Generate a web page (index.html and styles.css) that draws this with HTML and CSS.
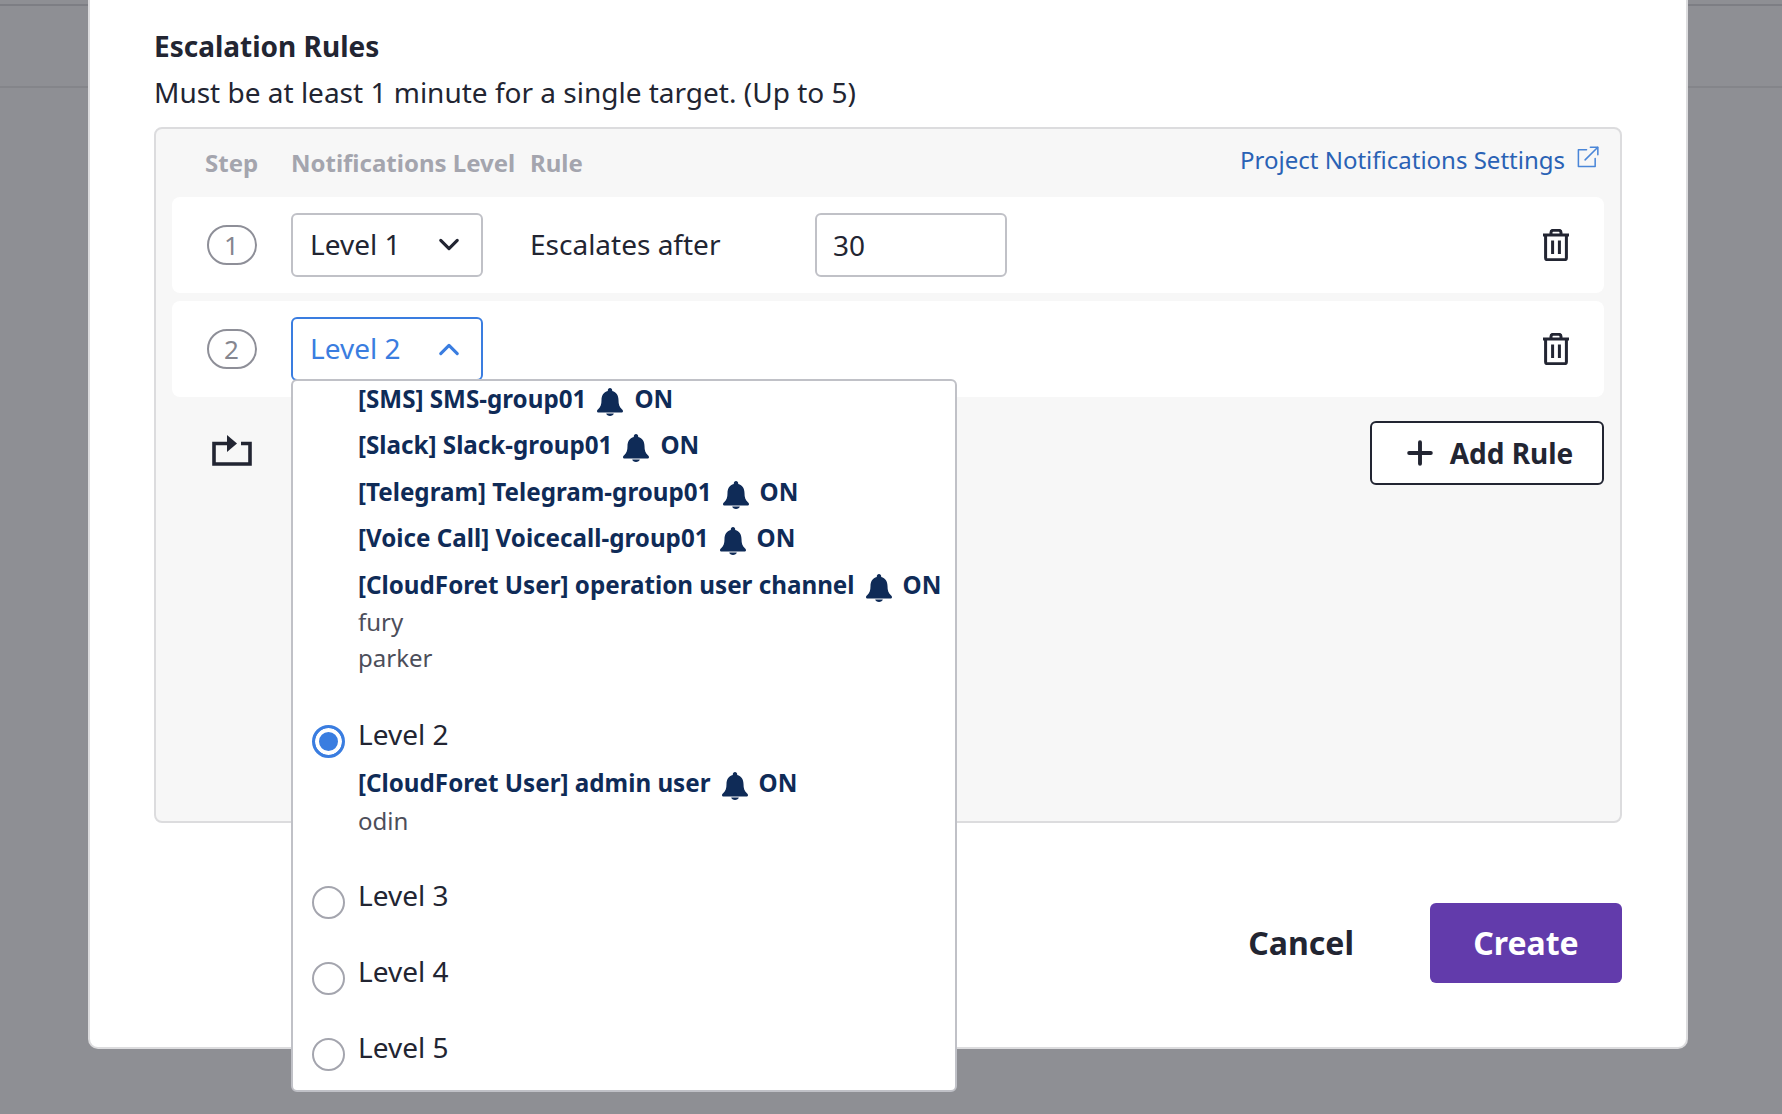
FILE: index.html
```html
<!DOCTYPE html>
<html lang="en">
<head>
    <meta charset="UTF-8">
    <meta name="viewport" content="width=device-width, initial-scale=1.0">
    <title>Escalation Rules</title>
    <link rel="stylesheet" href="styles.css">
</head>
<body>

    <div class="page-bar"></div>

    <div class="backdrop">
        <div class="modal">
            <h2 class="modal-title">Escalation Rules</h2>
            <p class="modal-help">Must be at least 1 minute for a single target. (Up to 5)</p>

            <div class="rules-box">
                <div class="rule-grid rules-head">
                    <span class="head-step">Step</span>
                    <span>Notifications Level</span>
                    <span class="head-rule">Rule</span>
                    <a class="settings-link" href="#">Project Notifications Settings
                        <svg class="icon-external" viewBox="0 0 24 24" fill="none" stroke="currentColor" stroke-width="1.6" stroke-linecap="round" stroke-linejoin="round"><path d="M11 4H2.5v17.5H20V13"/><path d="M9.5 14.5 22.5 1.5"/><path d="M15 1.2h7.8V9"/></svg>
                    </a>
                </div>

                <div class="rule-grid rule-row">
                    <span class="step-badge">1</span>
                    <div class="select-box">
                        <span class="select-label">Level 1</span>
                        <svg class="icon-chevron" viewBox="0 0 24 24" fill="none" stroke="currentColor" stroke-width="3.4" stroke-linecap="round" stroke-linejoin="round"><path d="M3 7l9 9 9-9"/></svg>
                    </div>
                    <span class="rule-text">Escalates after</span>
                    <div class="minutes-input">30</div>
                    <svg class="icon-trash" viewBox="0 0 28 32" fill="none" stroke="currentColor" stroke-width="3"><path d="M1 6h26"/><path d="M9 6V3.500C9 2.200 10 1.300 11.300 1.300h5.400C18 1.300 19 2.200 19 3.500V6"/><path d="M3.600 6v23c0 1 .7 1.700 1.700 1.700h17.400c1 0 1.700-.7 1.700-1.700V6"/><path d="M10.600 11.500v13.500M17.400 11.500v13.500"/></svg>
                </div>

                <div class="rule-grid rule-row">
                    <span class="step-badge">2</span>
                    <div class="select-wrap">
                        <div class="select-box select-open">
                            <span class="select-label">Level 2</span>
                            <svg class="icon-chevron" viewBox="0 0 24 24" fill="none" stroke="currentColor" stroke-width="3.4" stroke-linecap="round" stroke-linejoin="round"><path d="M3 17l9-9 9 9"/></svg>
                        </div>

                        <div class="level-menu">
                            <div class="level-list">
                                <div class="level-option option-scrolled">
                                    <span></span>
                                    <div>
                                        <div class="channel"><b>[SMS] SMS-group01</b><svg class="icon-bell" viewBox="0 0 26 28"><use href="#bell"/></svg><b>ON</b></div>
                                        <div class="channel"><b>[Slack] Slack-group01</b><svg class="icon-bell" viewBox="0 0 26 28"><use href="#bell"/></svg><b>ON</b></div>
                                        <div class="channel"><b>[Telegram] Telegram-group01</b><svg class="icon-bell" viewBox="0 0 26 28"><use href="#bell"/></svg><b>ON</b></div>
                                        <div class="channel"><b>[Voice Call] Voicecall-group01</b><svg class="icon-bell" viewBox="0 0 26 28"><use href="#bell"/></svg><b>ON</b></div>
                                        <div class="channel"><b>[CloudForet User] operation user channel</b><svg class="icon-bell" viewBox="0 0 26 28"><use href="#bell"/></svg><b>ON</b></div>
                                        <div class="user-name">fury</div>
                                        <div class="user-name">parker</div>
                                    </div>
                                </div>
                                <div class="level-option option-selected">
                                    <span class="radio radio-on"></span>
                                    <div>
                                        <div class="level-name">Level 2</div>
                                        <div class="channel channel-first"><b>[CloudForet User] admin user</b><svg class="icon-bell" viewBox="0 0 26 28"><use href="#bell"/></svg><b>ON</b></div>
                                        <div class="user-name">odin</div>
                                    </div>
                                </div>
                                <div class="level-option">
                                    <span class="radio"></span>
                                    <div class="level-name">Level 3</div>
                                </div>
                                <div class="level-option">
                                    <span class="radio"></span>
                                    <div class="level-name">Level 4</div>
                                </div>
                                <div class="level-option">
                                    <span class="radio"></span>
                                    <div class="level-name">Level 5</div>
                                </div>
                            </div>
                        </div>
                    </div>
                    <span></span>
                    <span></span>
                    <svg class="icon-trash" viewBox="0 0 28 32" fill="none" stroke="currentColor" stroke-width="3"><path d="M1 6h26"/><path d="M9 6V3.500C9 2.200 10 1.300 11.300 1.300h5.400C18 1.300 19 2.200 19 3.500V6"/><path d="M3.600 6v23c0 1 .7 1.700 1.700 1.700h17.400c1 0 1.700-.7 1.700-1.700V6"/><path d="M10.600 11.500v13.500M17.400 11.500v13.500"/></svg>
                </div>

                <div class="rules-actions">
                    <svg class="icon-repeat" viewBox="0 0 40 32" fill="none" stroke="currentColor" stroke-width="3.6"><path d="M15 9.500H2v20.500h36V9.500h-9"/><path d="M15 1l10 8.500-10 8.500z" fill="currentColor" stroke="none"/></svg>
                    <button class="add-rule">
                        <svg class="icon-plus" viewBox="0 0 24 24" fill="none" stroke="currentColor" stroke-width="3.6" stroke-linecap="round"><path d="M12 2v20M2 12h20"/></svg>
                        Add Rule
                    </button>
                </div>
            </div>

            <div class="modal-footer">
                <button class="btn-cancel">Cancel</button>
                <button class="btn-create">Create</button>
            </div>
        </div>
    </div>

    <svg class="svg-defs" width="0" height="0">
        <symbol id="bell" viewBox="0 0 26 28">
            <path fill="#0f2b57" d="M13 0c1.300 0 2.200 1 2.200 2.300v.7c4.300 1.100 6.300 4.700 6.300 9 0 4.300.9 7 3.400 9.300.8.800 1.100 1.300 1.100 2 0 .9-.7 1.300-1.700 1.300H1.700C.7 24.600 0 24.200 0 23.300c0-.7.3-1.200 1.100-2 2.500-2.300 3.400-5 3.400-9.300 0-4.300 2-7.900 6.300-9v-.7C10.800 1 11.700 0 13 0z"/>
            <path fill="#0f2b57" d="M9.200 25.500h7.600c-.3 1.500-1.900 2.500-3.800 2.500s-3.500-1-3.800-2.500z"/>
        </symbol>
    </svg>

</body>
</html>
```

FILE: styles.css
```css
* {
    box-sizing: border-box;
}
html, body {
    margin: 0;
    height: 100%;
}
body {
    font-family: "Noto Sans", "Open Sans", sans-serif;
    background-color: #8e8f94;
    color: #222532;
    overflow: hidden;
    position: relative;
}
b {
    font-weight: 700;
}
.svg-defs {
    position: absolute;
}
.page-bar {
    height: 84px;
    margin-top: 4px;
    border-top: 2px solid #7d7e84;
    border-bottom: 2px solid #84858a;
}
.backdrop {
    position: absolute;
    top: 0;
    left: 0;
    right: 0;
    bottom: 0;
    padding-left: 88px;
}
.modal {
    width: 1600px;
    height: 1049px;
    padding: 26px 64px 0;
    background-color: #fff;
    border: 2px solid #dcdcde;
    border-top: none;
    border-radius: 0 0 10px 10px;
}
.modal-title {
    margin: 0;
    font-size: 28px;
    line-height: 40px;
    font-weight: 700;
}
.modal-help {
    margin: 6px 0 0;
    font-size: 28px;
    line-height: 40px;
}
.rules-box {
    height: 696px;
    margin-top: 15px;
    padding: 0 16px;
    background-color: #f7f7f7;
    border: 2px solid #dcdcde;
    border-radius: 8px;
}
.rule-grid {
    display: grid;
    grid-template-columns: 119px 239px 285px 1fr auto;
    align-items: center;
}
.rules-head {
    height: 68px;
    padding-bottom: 2px;
    grid-template-columns: 119px 239px 100px 1fr;
    font-size: 24px;
    font-weight: 700;
    color: #a4a5ae;
}
.head-step {
    padding-left: 33px;
}
.settings-link {
    justify-self: end;
    display: flex;
    align-items: center;
    gap: 11px;
    margin-right: 5px;
    margin-top: -5px;
    font-weight: 400;
    color: #2a62b5;
    text-decoration: none;
}
.icon-external {
    width: 23px;
    height: 23px;
    color: #4a86d8;
    margin-top: -4px;
}
.rule-row {
    height: 96px;
    margin-bottom: 8px;
    padding-right: 34px;
    background-color: #fff;
    border-radius: 8px;
}
.step-badge {
    width: 50px;
    height: 40px;
    margin-left: 35px;
    padding-right: 1px;
    display: flex;
    align-items: center;
    justify-content: center;
    border: 2px solid #8e8f98;
    border-radius: 20px;
    font-size: 26px;
    color: #85868f;
}
.select-wrap {
    position: relative;
}
.select-box {
    width: 192px;
    height: 64px;
    padding: 0 21px 0 17px;
    display: flex;
    align-items: center;
    justify-content: space-between;
    background-color: #fff;
    border: 2px solid #c0c1c7;
    border-radius: 6px;
    font-size: 28px;
}
.select-label {
    margin-top: -2px;
}
.select-open {
    border-color: #3a7de0;
    color: #3a7de0;
}
.icon-chevron {
    width: 22px;
    height: 22px;
}
.rule-text {
    font-size: 28px;
    padding-bottom: 2px;
}
.minutes-input {
    width: 192px;
    height: 64px;
    padding: 0 16px;
    display: flex;
    align-items: center;
    background-color: #fff;
    border: 2px solid #c0c1c7;
    border-radius: 6px;
    font-size: 28px;
}
.icon-trash {
    width: 28px;
    height: 32px;
}
.level-menu {
    position: absolute;
    top: 62px;
    left: 0;
    width: 666px;
    height: 713px;
    overflow: hidden;
    background-color: #fff;
    border: 2px solid #c0c1c7;
    border-radius: 6px;
    z-index: 5;
}
.level-list {
    margin-top: -3px;
    padding-left: 19px;
}
.level-option {
    display: grid;
    grid-template-columns: 33px 1fr;
    column-gap: 13px;
    margin-bottom: 39px;
}
.option-scrolled {
    margin-bottom: 40px;
}
.option-selected {
    margin-bottom: 38px;
}
.channel {
    height: 40px;
    margin-bottom: 6.5px;
    display: flex;
    align-items: center;
    font-size: 24.2px;
    color: #0f2b57;
    white-space: nowrap;
}
.channel-first {
    margin-top: 10px;
    margin-bottom: 0;
}
.icon-bell {
    width: 26px;
    height: 28px;
    margin: 7px 11px 0 11px;
}
.user-name {
    font-size: 24px;
    line-height: 36px;
    color: #4c4e5a;
}
.channel + .user-name {
    margin-top: -7px;
}
.channel-first + .user-name {
    margin-top: 0;
}
.level-name {
    font-size: 28px;
    line-height: 37px;
}
.radio {
    width: 33px;
    height: 33px;
    margin: 9px 0 -9px;
    border: 2px solid #a4a5ae;
    border-radius: 50%;
    background-color: #fff;
}
.radio-on {
    border: 3px solid #3a7de0;
    background-color: #3a7de0;
    box-shadow: inset 0 0 0 4px #fff;
}
.rules-actions {
    display: flex;
    align-items: center;
    justify-content: space-between;
    margin-top: 24px;
    padding-left: 40px;
}
.icon-repeat {
    width: 40px;
    height: 32px;
    margin-top: -6px;
}
.add-rule {
    width: 234px;
    height: 64px;
    padding-left: 12px;
    display: flex;
    align-items: center;
    justify-content: center;
    gap: 17px;
    background-color: #fff;
    border: 2px solid #222532;
    border-radius: 6px;
    font-family: inherit;
    font-size: 28px;
    font-weight: 700;
    color: #222532;
}
.icon-plus {
    width: 26px;
    height: 26px;
}
.modal-footer {
    display: flex;
    justify-content: flex-end;
    align-items: center;
    gap: 76px;
    margin-top: 80px;
}
.btn-cancel {
    padding: 0 0 2px;
    background: none;
    border: none;
    font-family: inherit;
    font-size: 32px;
    font-weight: 700;
    color: #222532;
}
.btn-create {
    width: 192px;
    height: 80px;
    padding-bottom: 2px;
    background-color: #623bab;
    border: none;
    border-radius: 6px;
    font-family: inherit;
    font-size: 32px;
    font-weight: 700;
    color: #fff;
}
```
